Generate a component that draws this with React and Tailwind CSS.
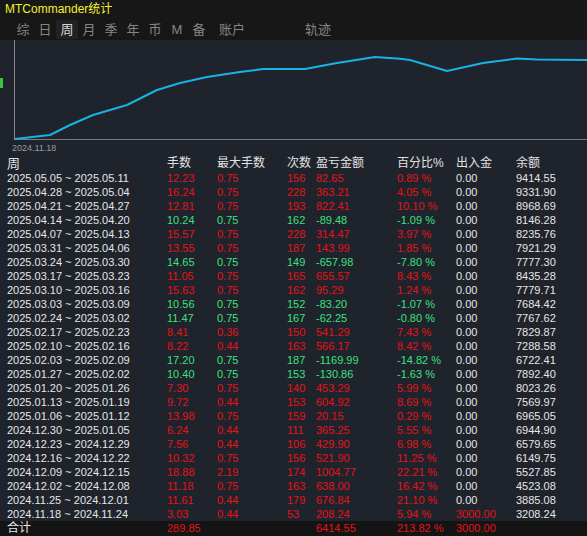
import React from "react";

const RED = "text-[#e3131b]";
const GREEN = "text-[#3be07f]";

const rows = [
  ["2025.05.05 ~ 2025.05.11", "12.23", "0.75", "156", "82.65", "0.89 %", "0.00", "9414.55"],
  ["2025.04.28 ~ 2025.05.04", "16.24", "0.75", "228", "363.21", "4.05 %", "0.00", "9331.90"],
  ["2025.04.21 ~ 2025.04.27", "12.81", "0.75", "193", "822.41", "10.10 %", "0.00", "8968.69"],
  ["2025.04.14 ~ 2025.04.20", "10.24", "0.75", "162", "-89.48", "-1.09 %", "0.00", "8146.28"],
  ["2025.04.07 ~ 2025.04.13", "15.57", "0.75", "228", "314.47", "3.97 %", "0.00", "8235.76"],
  ["2025.03.31 ~ 2025.04.06", "13.55", "0.75", "187", "143.99", "1.85 %", "0.00", "7921.29"],
  ["2025.03.24 ~ 2025.03.30", "14.65", "0.75", "149", "-657.98", "-7.80 %", "0.00", "7777.30"],
  ["2025.03.17 ~ 2025.03.23", "11.05", "0.75", "165", "655.57", "8.43 %", "0.00", "8435.28"],
  ["2025.03.10 ~ 2025.03.16", "15.63", "0.75", "162", "95.29", "1.24 %", "0.00", "7779.71"],
  ["2025.03.03 ~ 2025.03.09", "10.56", "0.75", "152", "-83.20", "-1.07 %", "0.00", "7684.42"],
  ["2025.02.24 ~ 2025.03.02", "11.47", "0.75", "167", "-62.25", "-0.80 %", "0.00", "7767.62"],
  ["2025.02.17 ~ 2025.02.23", "8.41", "0.36", "150", "541.29", "7.43 %", "0.00", "7829.87"],
  ["2025.02.10 ~ 2025.02.16", "8.22", "0.44", "163", "566.17", "8.42 %", "0.00", "7288.58"],
  ["2025.02.03 ~ 2025.02.09", "17.20", "0.75", "187", "-1169.99", "-14.82 %", "0.00", "6722.41"],
  ["2025.01.27 ~ 2025.02.02", "10.40", "0.75", "153", "-130.86", "-1.63 %", "0.00", "7892.40"],
  ["2025.01.20 ~ 2025.01.26", "7.30", "0.75", "140", "453.29", "5.99 %", "0.00", "8023.26"],
  ["2025.01.13 ~ 2025.01.19", "9.72", "0.44", "153", "604.92", "8.69 %", "0.00", "7569.97"],
  ["2025.01.06 ~ 2025.01.12", "13.98", "0.75", "159", "20.15", "0.29 %", "0.00", "6965.05"],
  ["2024.12.30 ~ 2025.01.05", "6.24", "0.44", "111", "365.25", "5.55 %", "0.00", "6944.90"],
  ["2024.12.23 ~ 2024.12.29", "7.56", "0.44", "106", "429.90", "6.98 %", "0.00", "6579.65"],
  ["2024.12.16 ~ 2024.12.22", "10.32", "0.75", "156", "521.90", "11.25 %", "0.00", "6149.75"],
  ["2024.12.09 ~ 2024.12.15", "18.88", "2.19", "174", "1004.77", "22.21 %", "0.00", "5527.85"],
  ["2024.12.02 ~ 2024.12.08", "11.18", "0.75", "163", "638.00", "16.42 %", "0.00", "4523.08"],
  ["2024.11.25 ~ 2024.12.01", "11.61", "0.44", "179", "676.84", "21.10 %", "0.00", "3885.08"],
  ["2024.11.18 ~ 2024.11.24", "3.03", "0.44", "53", "208.24", "5.94 %", "3000.00", "3208.24"],
];

const tabs = ["综", "日", "周", "月", "季", "年", "币", "M", "备"];

const curve = [
  [15, 99], [50, 95], [70, 85], [93, 75], [127, 65], [157, 50], [180, 43], [207, 37],
  [240, 32], [263, 29], [305, 29], [337, 23], [375, 17], [400, 18.7], [410, 20],
  [447, 31], [483, 23], [517, 18.5], [537, 19.5], [587, 20],
];

const cols = "grid grid-cols-[160px_50px_70px_29px_81px_59px_60px_1fr] pl-[7px]";

const App = () => {
  return (
    <div className="w-[587px] h-[536px] overflow-hidden bg-[#1f232b] font-['Liberation_Sans','Noto_Sans_CJK_SC',sans-serif]">
      {/* title */}
      <div className="h-[19px] bg-[#171717] pl-[5px] text-[12px] leading-[19px] text-[#f2f230]">
        MTCommander统计
      </div>

      {/* tabs */}
      <div className="h-[21px] bg-[#171717] flex items-center pl-[12px] text-[13px] text-[#858585]">
        {tabs.map((t) => (
          <div
            key={t}
            className={
              t === "周"
                ? "w-[22px] text-center leading-[19px] bg-[#222222] text-[#d8d8d8]"
                : "w-[22px] text-center leading-[19px]"
            }
          >
            {t}
          </div>
        ))}
        <div className="w-[40px] text-center leading-[19px] ml-[2px]">账户</div>
        <div className="ml-[53px] leading-[19px]">轨迹</div>
      </div>

      {/* chart */}
      <div className="relative h-[116px]">
        <svg width="587" height="116" className="absolute left-0 top-0">
          <rect x="0" y="38" width="3" height="10" fill="#3fc33f" />
          <line x1="14.5" y1="0" x2="14.5" y2="100" stroke="#8a8a8a" strokeWidth="1" />
          <line x1="14" y1="99.5" x2="587" y2="99.5" stroke="#7a7a7a" strokeWidth="1" />
          <polyline
            points={curve.map((p) => p.join(",")).join(" ")}
            fill="none"
            stroke="#18b2e6"
            strokeWidth="2"
            strokeLinejoin="round"
          />
          <text x="12" y="111" fontSize="9" fill="#9a9a9a" fontFamily="Liberation Sans, sans-serif">
            2024.11.18
          </text>
        </svg>
      </div>

      {/* header */}
      <div className={`${cols} h-[15px] items-center text-[12px] text-[#e2e2e2] leading-[15px]`}>
        <div className="text-[13px]">周</div>
        <div>手数</div>
        <div>最大手数</div>
        <div>次数</div>
        <div>盈亏金额</div>
        <div>百分比%</div>
        <div>出入金</div>
        <div>余额</div>
      </div>

      {/* rows */}
      {rows.map((r) => {
        const c = r[4].startsWith("-") ? GREEN : RED;
        return (
          <div key={r[0]} className={`${cols} h-[14px] text-[11px] leading-[14px] text-[#e6e6e6]`}>
            <div>{r[0]}</div>
            <div className={c}>{r[1]}</div>
            <div className={c}>{r[2]}</div>
            <div className={c}>{r[3]}</div>
            <div className={c}>{r[4]}</div>
            <div className={c}>{r[5]}</div>
            <div className={r[6] !== "0.00" ? RED : ""}>{r[6]}</div>
            <div>{r[7]}</div>
          </div>
        );
      })}

      {/* total */}
      <div className={`${cols} h-[15px] bg-[#141414] text-[11px] leading-[15px] text-[#e6e6e6]`}>
        <div className="text-[12px]">合计</div>
        <div className={RED}>289.85</div>
        <div></div>
        <div></div>
        <div className={RED}>6414.55</div>
        <div className={RED}>213.82 %</div>
        <div className={RED}>3000.00</div>
        <div></div>
      </div>
    </div>
  );
};

export default App;
